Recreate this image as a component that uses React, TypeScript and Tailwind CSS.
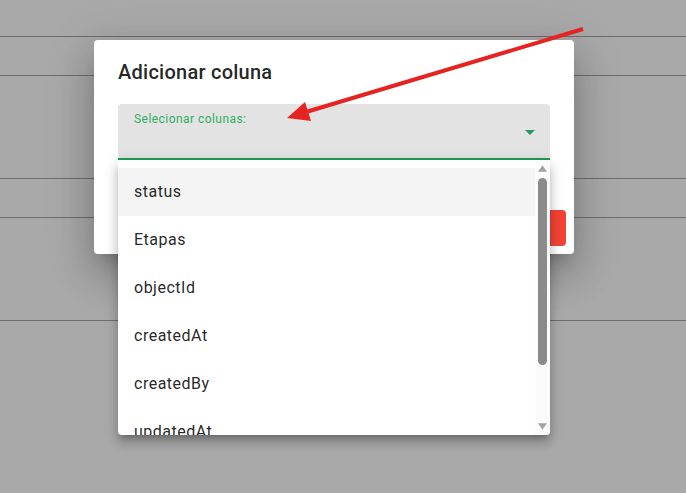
import { useState } from "react";

const columns = ["status", "Etapas", "objectId", "createdAt", "createdBy", "updatedAt"];

const rowHeights = ["h-[39px]", "h-[103px]", "h-[39px]", "h-[103px]", "h-[200px]"];

export default function App() {
  const [selected] = useState("status");

  return (
    <div className="relative w-full h-[493px] overflow-hidden bg-[#a9a9a9] font-['Roboto',sans-serif]">
      {/* page behind the backdrop */}
      <div className="flex flex-col">
        <div className="h-[36px]" />
        {rowHeights.map((h, i) => (
          <div key={i} className={`${h} border-t border-[#6e6e6e]`} />
        ))}
      </div>

      {/* dialog */}
      <div className="absolute left-[94px] top-[40px] w-[480px] h-[214px] flex flex-col bg-white rounded-[4px] shadow-[0_11px_15px_-7px_rgba(0,0,0,0.2),0_24px_38px_3px_rgba(0,0,0,0.14),0_9px_46px_8px_rgba(0,0,0,0.12)]">
        <h2 className="px-6 pt-4 h-12 leading-8 text-[20px] font-medium tracking-[0.25px] text-[rgba(0,0,0,0.87)]">
          Adicionar coluna
        </h2>
        <div className="px-6 pt-4">
          <div className="relative h-14 bg-[#e3e3e3] rounded-t-[4px] border-b-2 border-[#1e9e57]">
            <div className="pl-4 pt-[7px] text-[12px] leading-4 tracking-[0.45px] text-[#2fae64]">Selecionar colunas:</div>
            <svg viewBox="0 0 24 24" className="absolute right-[8px] top-[16px] w-6 h-6 fill-[#1e9e57]">
              <path d="M7 10l5 5 5-5z" />
            </svg>
          </div>
        </div>
        <div className="mt-auto flex justify-end p-2">
          <button className="h-9 px-4 rounded-[4px] bg-[#f44336] text-white text-[14px] font-medium tracking-wide">
            ADICIONAR
          </button>
        </div>
      </div>

      {/* select menu */}
      <div className="absolute left-[118px] top-[160px] w-[432px] h-[275px] flex bg-white rounded-[4px] overflow-hidden shadow-[0_5px_5px_-3px_rgba(0,0,0,0.2),0_8px_10px_1px_rgba(0,0,0,0.14),0_3px_14px_2px_rgba(0,0,0,0.12)]">
        <ul className="flex-1 pt-2 overflow-hidden">
          {columns.map((c) => (
            <li
              key={c}
              className={`h-12 px-4 flex items-center text-[16px] tracking-[0.5px] text-[rgba(0,0,0,0.87)] ${
                c === selected ? "bg-[#f4f4f4]" : ""
              }`}
            >
              {c}
            </li>
          ))}
        </ul>
        <div className="w-[15px] flex flex-col items-center bg-[#fbfbfb] pt-[5px] pb-[5px]">
          <svg viewBox="0 0 10 7" className="w-[9px] h-[7px] fill-[#a3a3a3]">
            <path d="M5 0L10 7H0z" />
          </svg>
          <div className="mt-[6px] w-[9px] h-[187px] rounded-full bg-[#8b8b8b]" />
          <div className="flex-1" />
          <svg viewBox="0 0 10 7" className="w-[9px] h-[7px] fill-[#a3a3a3]">
            <path d="M0 0H10L5 7z" />
          </svg>
        </div>
      </div>

      {/* annotation arrow */}
      <svg className="absolute left-0 top-0 w-[686px] h-[493px] pointer-events-none" viewBox="0 0 686 493">
        <line x1="306" y1="112" x2="583" y2="29" stroke="#e52421" strokeWidth="4" />
        <polygon points="287,118 311,121 305,102" fill="#e52421" />
      </svg>
    </div>
  );
}
